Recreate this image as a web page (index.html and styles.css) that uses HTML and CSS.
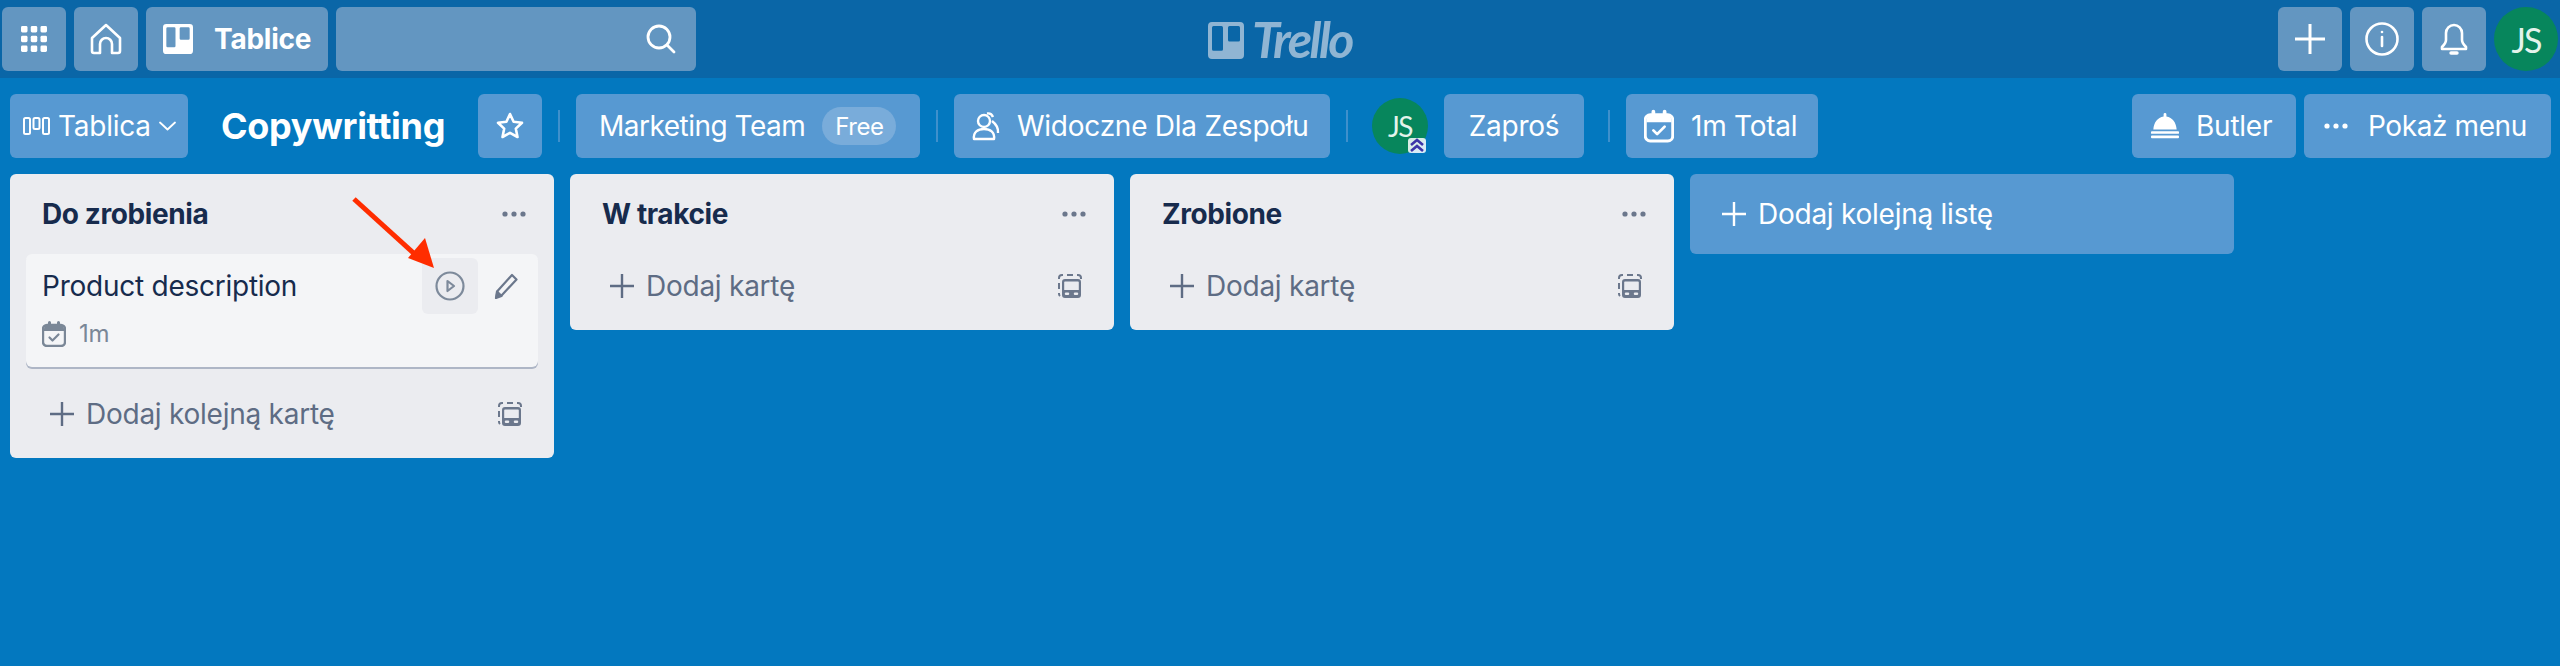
FILE: index.html
```html
<!DOCTYPE html>
<html lang="pl">
<head>
    <meta charset="UTF-8">
    <title>Copywritting | Trello</title>
    <link rel="stylesheet" href="styles.css">
</head>
<body>
    <svg class="sprites" width="0" height="0">
        <symbol id="i-template" viewBox="0 0 24 24">
            <path d="M1 5V4a3 3 0 0 1 3-3h1M9 1h6M19 1h1a3 3 0 0 1 3 3v1M1 9v6M1 19v1a3 3 0 0 0 1 2" fill="none" stroke="currentColor" stroke-width="2"/>
            <path d="M7 5h13a3 3 0 0 1 3 3v13a3 3 0 0 1-3 3H7a3 3 0 0 1-3-3V8a3 3 0 0 1 3-3zm0 2.500a.8.8 0 0 0-.8.8V16h14.600V8.300a.8.8 0 0 0-.8-.8zM8 18.500a1 1 0 0 0 0 2.500h2a1 1 0 0 0 0-2.500zm9 0a1 1 0 0 0 0 2.500h2a1 1 0 0 0 0-2.500z" fill="currentColor" fill-rule="evenodd"/>
        </symbol>
        <symbol id="i-dots" viewBox="0 0 24 6">
            <circle cx="3" cy="3" r="2.600" fill="currentColor"/>
            <circle cx="12" cy="3" r="2.600" fill="currentColor"/>
            <circle cx="21" cy="3" r="2.600" fill="currentColor"/>
        </symbol>
        <symbol id="i-plus" viewBox="0 0 24 24">
            <path d="M12 0v24M0 12h24" stroke="currentColor" stroke-width="2.400" stroke-linecap="round"/>
        </symbol>
        <symbol id="i-calendar" viewBox="0 0 24 26">
            <path d="M5 4h14a4 4 0 0 1 4 4v13a4 4 0 0 1-4 4H5a4 4 0 0 1-4-4V8a4 4 0 0 1 4-4z" fill="none" stroke="currentColor" stroke-width="2.400"/>
            <path d="M2 8a4 4 0 0 1 4-4V1.500a1.500 1.500 0 0 1 3 0V4h6V1.500a1.500 1.500 0 0 1 3 0V4a4 4 0 0 1 4 4v2H2z" fill="currentColor"/>
            <path d="M7.500 16.500l3 3 6-6" fill="none" stroke="currentColor" stroke-width="2.200" stroke-linecap="round" stroke-linejoin="round"/>
        </symbol>
        <symbol id="i-board" viewBox="0 0 36 36">
            <path d="M4 0h28a4 4 0 0 1 4 4v28a4 4 0 0 1-4 4H4a4 4 0 0 1-4-4V4a4 4 0 0 1 4-4zm1.500 4A1.500 1.500 0 0 0 4 5.500v21A1.500 1.500 0 0 0 5.500 28h8a1.500 1.500 0 0 0 1.500-1.500v-21A1.500 1.500 0 0 0 13.500 4zm16 0A1.500 1.500 0 0 0 20 5.500v12a1.500 1.500 0 0 0 1.500 1.500h9a1.500 1.500 0 0 0 1.500-1.500v-12A1.500 1.500 0 0 0 30.500 4z" fill="currentColor" fill-rule="evenodd"/>
        </symbol>
    </svg>

    <header class="topbar">
        <div class="topbar-left">
            <button class="top-btn square">
                <svg class="icon" width="26" height="26" viewBox="0 0 28 28" fill="currentColor">
                    <rect x="0" y="0" width="7" height="7" rx="1.500"/><rect x="10.500" y="0" width="7" height="7" rx="1.500"/><rect x="21" y="0" width="7" height="7" rx="1.500"/>
                    <rect x="0" y="10.500" width="7" height="7" rx="1.500"/><rect x="10.500" y="10.500" width="7" height="7" rx="1.500"/><rect x="21" y="10.500" width="7" height="7" rx="1.500"/>
                    <rect x="0" y="21" width="7" height="7" rx="1.500"/><rect x="10.500" y="21" width="7" height="7" rx="1.500"/><rect x="21" y="21" width="7" height="7" rx="1.500"/>
                </svg>
            </button>
            <button class="top-btn square">
                <svg class="icon" width="32" height="32" viewBox="0 0 32 32" fill="none" stroke="currentColor" stroke-width="2.600" stroke-linejoin="round">
                    <path d="M16 2L2 15v13a2 2 0 0 0 2 2h6V21a6 6 0 0 1 12 0v9h6a2 2 0 0 0 2-2V15z"/>
                </svg>
            </button>
            <button class="top-btn boards-btn">
                <svg class="icon" width="30" height="30"><use href="#i-board"/></svg>
                <span>Tablice</span>
            </button>
            <div class="search">
                <svg class="icon" width="30" height="30" viewBox="0 0 30 30" fill="none" stroke="currentColor" stroke-width="2.800" stroke-linecap="round">
                    <circle cx="13" cy="13" r="11"/><path d="M21 21l7 7"/>
                </svg>
            </div>
        </div>
        <div class="logo">
            <svg class="logo-mark" width="36" height="37" viewBox="0 0 36 36" preserveAspectRatio="none"><use href="#i-board"/></svg>
            <span class="logo-text">Trello</span>
        </div>
        <div class="topbar-right">
            <button class="top-btn tiny">
                <svg class="icon" width="30" height="30"><use href="#i-plus"/></svg>
            </button>
            <button class="top-btn tiny">
                <svg class="icon" width="34" height="34" viewBox="0 0 34 34" fill="none" stroke="currentColor" stroke-width="2.600" stroke-linecap="round">
                    <circle cx="17" cy="17" r="15.500"/><path d="M17 15v9"/><circle cx="17" cy="10" r="1.300" fill="currentColor" stroke="none"/>
                </svg>
            </button>
            <button class="top-btn tiny">
                <svg class="icon" width="28" height="34" viewBox="0 0 28 34" fill="none" stroke="currentColor" stroke-width="2.600" stroke-linejoin="round">
                    <path d="M14 3a8 8 0 0 0-8 8v7c0 3-2 5-4 7v2h24v-2c-2-2-4-4-4-7v-7a8 8 0 0 0-8-8z"/>
                    <path d="M11 31h6" stroke-width="3.400" stroke-linecap="round"/>
                </svg>
            </button>
            <div class="avatar avatar-top">JS</div>
        </div>
    </header>

    <section class="board-head">
        <button class="head-btn switcher">
            <svg class="icon" width="27" height="18" viewBox="0 0 27 18" fill="none" stroke="currentColor" stroke-width="2">
                <rect x="1" y="1" width="6" height="16" rx="1.500"/><rect x="10.500" y="1" width="6" height="11" rx="1.500"/><rect x="20" y="1" width="6" height="16" rx="1.500"/>
            </svg>
            <span>Tablica</span>
            <svg class="icon chevron" width="17" height="10" viewBox="0 0 17 10" fill="none" stroke="currentColor" stroke-width="1.800" stroke-linecap="round" stroke-linejoin="round">
                <path d="M1 1.500l7.500 7 7.500-7"/>
            </svg>
        </button>
        <h1 class="board-name">Copywritting</h1>
        <button class="head-btn star">
            <svg class="icon" width="28" height="28" viewBox="0 0 28 28" fill="none" stroke="currentColor" stroke-width="2.600" stroke-linejoin="round">
                <path d="M14 2l3.600 7.800 8.400 1-6.200 5.800 1.700 8.400-7.500-4.200L6.500 25l1.700-8.400L2 10.800l8.400-1z"/>
            </svg>
        </button>
        <span class="sep"></span>
        <button class="head-btn team">
            <span>Marketing Team</span>
            <span class="pill">Free</span>
        </button>
        <span class="sep"></span>
        <button class="head-btn visibility">
            <svg class="icon" width="28" height="30" viewBox="0 0 28 30" fill="none" stroke="currentColor" stroke-width="2.400" stroke-linejoin="round">
                <circle cx="12" cy="10" r="6"/>
                <path d="M15 2.500a5.500 5.500 0 0 1 6 3.500M20 10c4 3 6.500 7 6 12"/>
                <path d="M2 28c-1-7 4-10 10-10s11 3 10 10z"/>
            </svg>
            <span>Widoczne Dla Zespołu</span>
        </button>
        <span class="sep"></span>
        <div class="avatar avatar-member">JS
            <span class="admin-badge">
                <svg width="18" height="15" viewBox="0 0 18 15" fill="none" stroke="#3d35a8" stroke-width="2.600">
                    <path d="M3 7l6-5 6 5M3 13l6-5 6 5"/>
                </svg>
            </span>
        </div>
        <button class="head-btn invite">Zaproś</button>
        <span class="sep"></span>
        <button class="head-btn total">
            <svg class="icon" width="30" height="34"><use href="#i-calendar"/></svg>
            <span>1m Total</span>
        </button>
        <button class="head-btn butler">
            <svg class="icon" width="28" height="26" viewBox="0 0 30 30" preserveAspectRatio="none" fill="currentColor">
                <path d="M13.500 1.500a1.500 1.500 0 0 1 3 0V4C23 5 27 11 27.500 19h-25C3 11 7 5 13.500 4z"/>
                <rect x="0" y="21" width="30" height="3" rx="1"/><rect x="0" y="26" width="30" height="3" rx="1"/>
            </svg>
            <span>Butler</span>
        </button>
        <button class="head-btn menu">
            <svg class="icon" width="24" height="6"><use href="#i-dots"/></svg>
            <span>Pokaż menu</span>
        </button>
    </section>

    <main class="board">
        <div class="list">
            <div class="list-head">
                <h2>Do zrobienia</h2>
                <svg class="list-dots" width="24" height="6"><use href="#i-dots"/></svg>
            </div>
            <div class="card">
                <div class="card-row">
                    <span class="card-title">Product description</span>
                    <span class="card-action active">
                        <svg width="30" height="30" viewBox="0 0 30 30" fill="none" stroke="#7d8a9b" stroke-width="2.200" stroke-linejoin="round">
                            <circle cx="15" cy="15" r="13.500"/><path d="M12.500 10l6.500 5-6.500 5z"/>
                        </svg>
                    </span>
                    <span class="card-action">
                        <svg width="24" height="26" viewBox="0 0 24 26" fill="none" stroke="#6b778c" stroke-width="2.200" stroke-linejoin="round">
                            <path d="M18 2l4.500 4.500L8 22l-5.500 2 1-6z"/><path d="M3 18.500L7.500 23 2 25z" fill="#6b778c"/>
                        </svg>
                    </span>
                </div>
                <div class="card-badge">
                    <svg width="24" height="26"><use href="#i-calendar"/></svg>
                    <span>1m</span>
                </div>
            </div>
            <div class="list-foot">
                <svg width="24" height="24"><use href="#i-plus"/></svg>
                <span class="add-label">Dodaj kolejną kartę</span>
                <svg class="template" width="24" height="24"><use href="#i-template"/></svg>
            </div>
        </div>

        <div class="list">
            <div class="list-head">
                <h2>W trakcie</h2>
                <svg class="list-dots" width="24" height="6"><use href="#i-dots"/></svg>
            </div>
            <div class="list-foot">
                <svg width="24" height="24"><use href="#i-plus"/></svg>
                <span class="add-label">Dodaj kartę</span>
                <svg class="template" width="24" height="24"><use href="#i-template"/></svg>
            </div>
        </div>

        <div class="list">
            <div class="list-head">
                <h2>Zrobione</h2>
                <svg class="list-dots" width="24" height="6"><use href="#i-dots"/></svg>
            </div>
            <div class="list-foot">
                <svg width="24" height="24"><use href="#i-plus"/></svg>
                <span class="add-label">Dodaj kartę</span>
                <svg class="template" width="24" height="24"><use href="#i-template"/></svg>
            </div>
        </div>

        <button class="add-list">
            <svg width="24" height="24"><use href="#i-plus"/></svg>
            <span>Dodaj kolejną listę</span>
        </button>
    </main>

    <svg class="arrow" width="90" height="80" viewBox="0 0 90 80">
        <path d="M3 3L68 62" stroke="#ff2d00" stroke-width="5"/>
        <path d="M83 72L57 62 74 42z" fill="#ff2d00"/>
    </svg>
</body>
</html>
```

FILE: styles.css
```css
* {
    box-sizing: border-box;
}
html, body {
    height: 100%;
}
body {
    margin: 0;
    position: relative;
    overflow: hidden;
    font-family: Inter, "Liberation Sans", sans-serif;
    font-size: 28px;
    letter-spacing: -0.25px;
    color: #fff;
    background-color: #0378bf;
}
button {
    border: none;
    padding: 0;
    margin: 0;
    color: inherit;
    font: inherit;
    letter-spacing: inherit;
}
.sprites {
    position: absolute;
}
.icon {
    flex: none;
    display: block;
}

/* top bar */
.topbar {
    height: 78px;
    padding: 6px 2px;
    display: grid;
    grid-template-columns: 1fr auto 1fr;
    align-items: center;
    background-color: #0a66a7;
}
.topbar-left, .topbar-right {
    display: flex;
    align-items: center;
    gap: 8px;
}
.topbar-right {
    justify-content: flex-end;
}
.top-btn {
    height: 64px;
    display: flex;
    align-items: center;
    justify-content: center;
    background-color: #6396c1;
    border-radius: 6px;
}
.top-btn.square {
    width: 64px;
}
.top-btn.tiny {
    width: 64px;
}
.boards-btn {
    width: 182px;
    padding-left: 17px;
    justify-content: flex-start;
    gap: 21px;
    font-weight: 700;
}
.search {
    width: 360px;
    height: 64px;
    padding-right: 20px;
    display: flex;
    align-items: center;
    justify-content: flex-end;
    background-color: #6396c1;
    border-radius: 6px;
}
.logo {
    display: flex;
    align-items: center;
    gap: 8px;
    color: #90b5d3;
}
.logo-mark {
    display: block;
    margin-top: 2px;
}
.logo-text {
    font-family: Lato, sans-serif;
    font-size: 50px;
    font-weight: 700;
    font-style: italic;
    letter-spacing: -2.5px;
    line-height: 40px;
}
.avatar {
    display: flex;
    align-items: center;
    justify-content: center;
    border-radius: 50%;
    background-color: #07865c;
    font-family: Lato, sans-serif;
    font-weight: 400;
    color: #e4f3ec;
}
.avatar-top {
    width: 64px;
    height: 64px;
    font-size: 34px;
    letter-spacing: -2px;
}

/* board header */
.board-head {
    height: 96px;
    padding: 16px 9px 16px 10px;
    display: flex;
    align-items: center;
}
.head-btn {
    height: 64px;
    flex: none;
    display: flex;
    align-items: center;
    justify-content: flex-start;
    background-color: #5799d2;
    border-radius: 6px;
    white-space: nowrap;
}
.switcher {
    width: 178px;
    padding-left: 13px;
    gap: 8px;
}
.board-name {
    width: 224px;
    margin: 0 33px;
    font-size: 36px;
    font-weight: 700;
    letter-spacing: -0.3px;
    white-space: nowrap;
}
.star {
    width: 64px;
    justify-content: center;
}
.sep {
    flex: none;
    width: 2px;
    height: 32px;
    margin: 0 16px;
    background-color: #3f90cc;
}
.team {
    width: 344px;
    padding-left: 23px;
    gap: 17px;
    letter-spacing: -0.5px;
}
.pill {
    height: 38px;
    width: 74px;
    display: flex;
    align-items: center;
    justify-content: center;
    font-size: 24px;
    background-color: #79acda;
    border-radius: 19px;
}
.visibility {
    width: 376px;
    padding-left: 18px;
    gap: 17px;
}
.avatar-member {
    position: relative;
    width: 56px;
    height: 56px;
    margin: 0 16px 0 8px;
    font-size: 28px;
    letter-spacing: -1.5px;
}
.admin-badge {
    position: absolute;
    right: 2px;
    bottom: 1px;
    width: 18px;
    height: 15px;
    display: flex;
    background-color: rgba(255, 255, 255, 0.85);
    border-radius: 3px;
}
.invite {
    width: 140px;
    margin-right: 8px;
    justify-content: center;
}
.total {
    width: 192px;
    padding-left: 18px;
    gap: 17px;
}
.butler {
    width: 164px;
    padding-left: 19px;
    gap: 17px;
    margin-left: auto;
}
.menu {
    width: 247px;
    padding-left: 20px;
    gap: 20px;
    margin-left: 8px;
    letter-spacing: -0.4px;
}

/* lists */
.board {
    padding: 0 10px;
    display: flex;
    align-items: flex-start;
    gap: 16px;
}
.list {
    width: 544px;
    flex: none;
    color: #172b4d;
    background-color: #ebecf0;
    border-radius: 6px;
}
.list-head {
    height: 80px;
    padding: 0 28px 0 32px;
    display: flex;
    align-items: center;
    justify-content: space-between;
}
.list-head h2 {
    margin: 0;
    font-size: 28px;
    font-weight: 700;
    letter-spacing: -0.4px;
}
.list-dots {
    display: block;
    color: #6b778c;
}
.card {
    height: 113px;
    margin: 0 16px 3px;
    padding: 4px 4px 0 16px;
    background-color: #f4f5f7;
    border-radius: 6px;
    box-shadow: 0 2px 0 #aeb6c6;
}
.card-row {
    display: flex;
    align-items: center;
}
.card-title {
    flex: 1;
}
.card-action {
    width: 56px;
    height: 56px;
    display: flex;
    align-items: center;
    justify-content: center;
    border-radius: 6px;
}
.card-action.active {
    background-color: #ebecf0;
}
.card-badge {
    margin-top: 5px;
    display: flex;
    align-items: center;
    gap: 13px;
    font-size: 24px;
    color: #7a8797;
}
.card-badge svg {
    display: block;
}
.list-foot {
    height: 88px;
    padding: 0 32px 0 40px;
    display: flex;
    align-items: center;
    gap: 12px;
    color: #5e6c84;
}
.list-head + .list-foot {
    margin-top: -12px;
}
.list-foot svg {
    display: block;
}
.add-label {
    flex: 1;
}
.template {
    color: #6b778c;
}
.add-list {
    width: 544px;
    height: 80px;
    flex: none;
    padding-left: 32px;
    display: flex;
    align-items: center;
    gap: 12px;
    background-color: #5799d2;
    border-radius: 6px;
}

/* red annotation over the play button */
.arrow {
    position: absolute;
    left: 351px;
    top: 196px;
}
```
